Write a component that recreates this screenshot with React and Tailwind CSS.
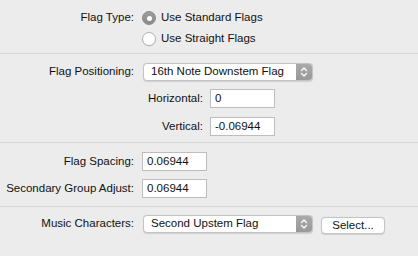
import React from "react";

function Stepper() {
  return (
    <div className="flex h-full w-[16px] shrink-0 items-center justify-center rounded-r-[3px] bg-gradient-to-b from-[#aaaaaa] to-[#999999]">
      <svg width="8" height="12" viewBox="0 0 8 12" fill="none">
        <path d="M1.5 4.5 L4 2 L6.5 4.5" stroke="white" strokeWidth="1.3" strokeLinecap="round" strokeLinejoin="round" />
        <path d="M1.5 7.5 L4 10 L6.5 7.5" stroke="white" strokeWidth="1.3" strokeLinecap="round" strokeLinejoin="round" />
      </svg>
    </div>
  );
}

function Select({ value }) {
  return (
    <div className="flex h-[18px] w-[170px] items-stretch rounded-[4px] border border-[#c4c4c4] bg-white shadow-[0_0.5px_1px_rgba(0,0,0,0.12)]">
      <div className="flex flex-1 items-center whitespace-nowrap pl-[7px] leading-none">{value}</div>
      <Stepper />
    </div>
  );
}

function Input({ value, w = "w-[65px]" }) {
  return (
    <div className={`flex h-[19px] ${w} items-center whitespace-nowrap border border-[#bdbdbd] bg-white pl-[4px] leading-none`}>
      {value}
    </div>
  );
}

function Radio({ checked }) {
  if (checked) {
    return (
      <div className="flex h-[14px] w-[14px] shrink-0 items-center justify-center rounded-full border border-[#8a8a8a] bg-gradient-to-b from-[#9d9d9d] to-[#8a8a8a]">
        <div className="h-[5px] w-[5px] rounded-full bg-white" />
      </div>
    );
  }
  return (
    <div className="h-[14px] w-[14px] shrink-0 rounded-full border border-[#b3b3b3] bg-white shadow-[0_0.5px_1px_rgba(0,0,0,0.1)]" />
  );
}

function Label({ children }) {
  return (
    <div className="flex w-[135px] shrink-0 justify-end whitespace-nowrap pr-[1px] leading-none">{children}</div>
  );
}

export default function App() {
  return (
    <div
      className="h-[256px] w-[418px] overflow-hidden bg-[#ececec] text-[11.5px] text-[#111111]"
      style={{ fontFamily: '"Liberation Sans", Arial, sans-serif' }}
    >
      {/* Section 1 */}
      <div className="flex flex-col gap-[1px] border-b border-[#d6d6d6] pt-[8px] pb-[4px]">
        <div className="flex h-[20px] items-center">
          <Label>Flag Type:</Label>
          <div className="ml-[7px] flex items-center gap-[5px] whitespace-nowrap">
            <Radio checked />
            <span className="leading-none">Use Standard Flags</span>
          </div>
        </div>
        <div className="flex h-[20px] items-center">
          <div className="w-[135px] shrink-0" />
          <div className="ml-[7px] flex items-center gap-[5px] whitespace-nowrap">
            <Radio />
            <span className="leading-none">Use Straight Flags</span>
          </div>
        </div>
      </div>

      {/* Section 2 */}
      <div className="flex flex-col border-b border-[#d6d6d6] pt-[9px] pb-[6px]">
        <div className="flex h-[18px] items-center">
          <Label>Flag Positioning:</Label>
          <div className="ml-[8px]">
            <Select value="16th Note Downstem Flag" />
          </div>
        </div>
        <div className="mt-[8px] flex h-[19px] items-center">
          <div className="flex w-[203px] shrink-0 justify-end whitespace-nowrap leading-none">Horizontal:</div>
          <div className="ml-[7px]">
            <Input value="0" />
          </div>
        </div>
        <div className="mt-[9px] flex h-[19px] items-center">
          <div className="flex w-[203px] shrink-0 justify-end whitespace-nowrap leading-none">Vertical:</div>
          <div className="ml-[7px]">
            <Input value="-0.06944" />
          </div>
        </div>
      </div>

      {/* Section 3 */}
      <div className="flex flex-col border-b border-[#d6d6d6] pt-[9px] pb-[8px]">
        <div className="flex h-[19px] items-center">
          <Label>Flag Spacing:</Label>
          <div className="ml-[7px]">
            <Input value="0.06944" />
          </div>
        </div>
        <div className="mt-[8px] flex h-[19px] items-center">
          <Label>Secondary Group Adjust:</Label>
          <div className="ml-[7px]">
            <Input value="0.06944" />
          </div>
        </div>
      </div>

      {/* Section 4 */}
      <div className="flex items-start pt-[8px]">
        <div className="flex h-[18px] items-center">
          <Label>Music Characters:</Label>
          <div className="ml-[8px]">
            <Select value="Second Upstem Flag" />
          </div>
        </div>
        <div className="ml-[8px] mt-[2px] flex h-[17px] w-[64px] items-center justify-center whitespace-nowrap rounded-[4px] border border-[#c4c4c4] bg-white leading-none shadow-[0_0.5px_1px_rgba(0,0,0,0.12)]">
          Select...
        </div>
      </div>
    </div>
  );
}
